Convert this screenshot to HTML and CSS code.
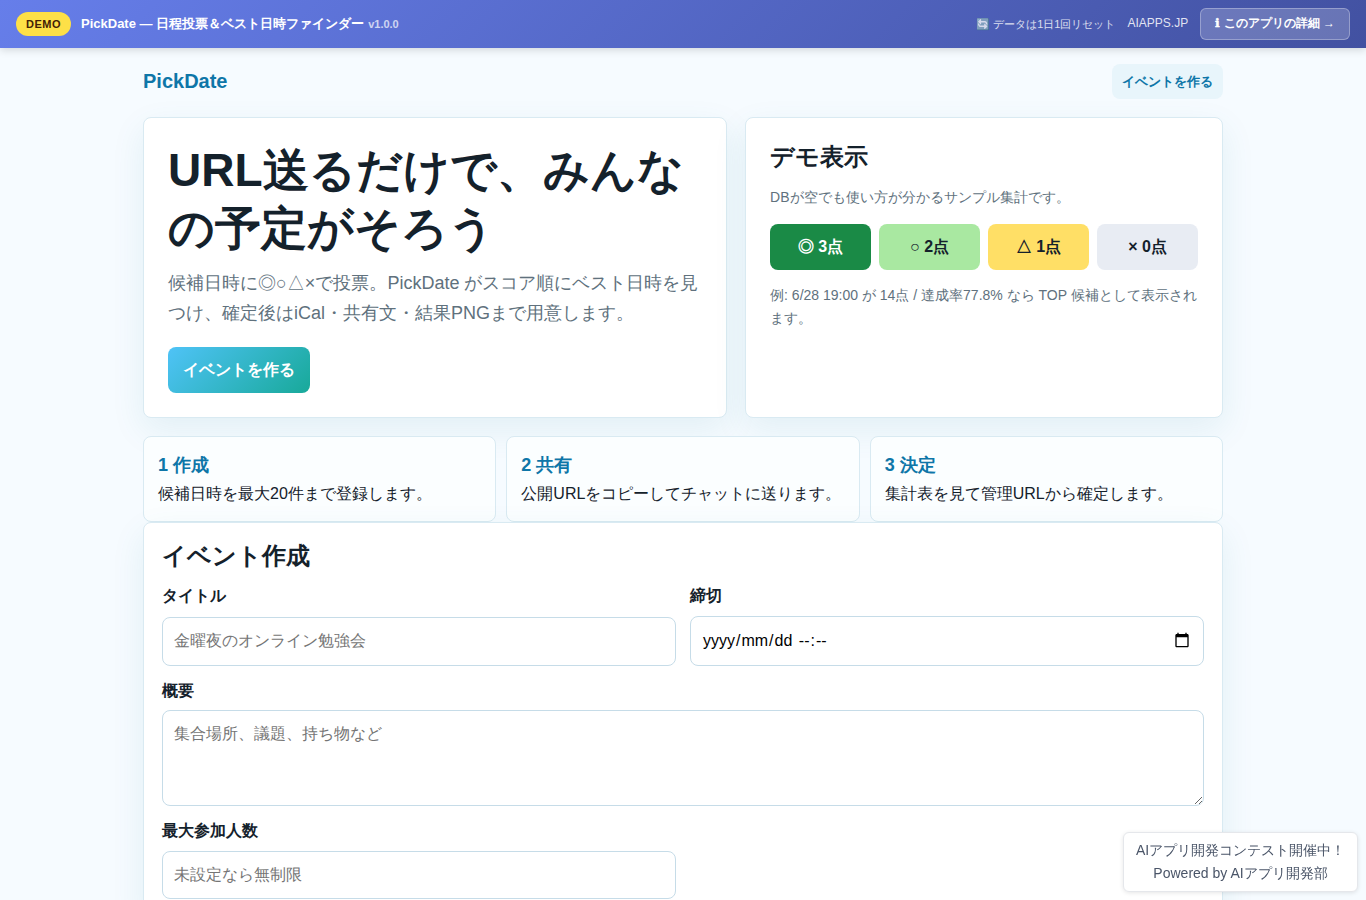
FILE: index.html
```html
<!DOCTYPE html>
<html lang="ja">
<head>
<meta charset="utf-8">
<title>PickDate</title>
<link rel="stylesheet" href="styles.css">
</head>
<body>
<header class="demo-bar">
  <div class="demo-left">
    <span class="demo-badge">DEMO</span>
    <span class="demo-title">PickDate — 日程投票＆ベスト日時ファインダー <small class="demo-version">v1.0.0</small></span>
  </div>
  <div class="demo-right">
    <span class="demo-reset">🔄 データは1日1回リセット</span>
    <a class="demo-site" href="#">AIAPPS.JP</a>
    <a class="demo-detail" href="#"><span class="info">ℹ</span> このアプリの詳細 →</a>
  </div>
</header>
<div class="shell">
  <nav class="topbar">
    <a class="brand" href="#">PickDate</a>
    <a class="nav-link" href="#create">イベントを作る</a>
  </nav>
  <main>
    <section class="hero">
      <div class="card hero-copy">
        <h1>URL送るだけで、みんなの予定がそろう</h1>
        <p class="lead">候補日時に◎○△×で投票。PickDate がスコア順にベスト日時を見つけ、確定後はiCal・共有文・結果PNGまで用意します。</p>
        <a class="primary" href="#create">イベントを作る</a>
      </div>
      <div class="card demo-card">
        <h2>デモ表示</h2>
        <p class="muted">DBが空でも使い方が分かるサンプル集計です。</p>
        <div class="scores">
          <span class="score best">◎ 3点</span>
          <span class="score good">○ 2点</span>
          <span class="score maybe">△ 1点</span>
          <span class="score no">× 0点</span>
        </div>
        <p class="muted">例: 6/28 19:00 が 14点 / 達成率77.8% なら TOP 候補として表示されます。</p>
      </div>
    </section>
    <section class="steps">
      <div class="step"><strong>1 作成</strong><span>候補日時を最大20件まで登録します。</span></div>
      <div class="step"><strong>2 共有</strong><span>公開URLをコピーしてチャットに送ります。</span></div>
      <div class="step"><strong>3 決定</strong><span>集計表を見て管理URLから確定します。</span></div>
    </section>
    <form class="card form" id="create">
      <h2>イベント作成</h2>
      <div class="fields">
        <label>タイトル<input class="control" type="text" placeholder="金曜夜のオンライン勉強会"></label>
        <div class="field">締切
          <div class="control date" role="textbox" tabindex="0">
            <span class="date-text"><span>yyyy</span>/<span>mm</span>/<span>dd</span> <span>--</span>:<span>--</span></span>
            <svg class="calendar" viewBox="0 0 24 24" aria-hidden="true"><path d="M20 3h-1V1h-2v2H7V1H5v2H4c-1.1 0-2 .9-2 2v16c0 1.1.9 2 2 2h16c1.1 0 2-.9 2-2V5c0-1.1-.9-2-2-2zm0 18H4V8h16v13z"/></svg>
          </div>
        </div>
        <label class="wide">概要<textarea class="control" placeholder="集合場所、議題、持ち物など"></textarea></label>
        <label>最大参加人数<input class="control" type="number" placeholder="未設定なら無制限"></label>
      </div>
    </form>
  </main>
</div>
<aside class="powered"><span>AIアプリ開発コンテスト開催中！</span><span>Powered by AIアプリ開発部</span></aside>
</body>
</html>
```
FILE: styles.css
```css
* { box-sizing: border-box; }
html { height: 100%; overflow: hidden; }
body {
  margin: 0;
  height: 100%;
  overflow: hidden;
  background: #f6fbff;
  color: #14212b;
  font-family: "Liberation Sans", sans-serif;
  font-size: 16px;
  line-height: 1.65;
}
a { text-decoration: none; }
h1, h2, p { margin: 0; }

.demo-bar {
  position: relative;
  height: 48px;
  padding: 0 16px;
  display: flex;
  align-items: center;
  justify-content: space-between;
  background: linear-gradient(135deg, #667eea, #4251a1);
  box-shadow: 0 2px 8px rgba(0, 0, 0, .15);
  color: #fff;
  line-height: 1.5;
}
.demo-left { display: flex; align-items: center; gap: 10px; }
.demo-right { display: flex; align-items: center; gap: 12px; }
.demo-badge {
  padding: 4px 10px;
  border-radius: 12px;
  background: #fde047;
  color: #422006;
  font-size: 11px;
  font-weight: 700;
  letter-spacing: .5px;
}
.demo-title { font-size: 13px; font-weight: 600; }
.demo-version { margin-left: .4px; font-size: 11px; opacity: .7; }
.demo-reset { font-size: 11px; opacity: .8; }
.demo-site { padding-bottom: 2px; color: rgba(255, 255, 255, .85); font-size: 12px; }
.demo-detail {
  padding: 5px 14px 7px;
  border: 1px solid rgba(255, 255, 255, .3);
  border-radius: 6px;
  background: rgba(255, 255, 255, .2);
  color: #fff;
  font-size: 12px;
  font-weight: 600;
}
.info {
  display: inline-block;
  width: 5.2px;
  font-family: "DejaVu Sans", sans-serif;
  line-height: 1;
  -webkit-text-stroke: .5px #fff;
}

.shell { width: 1080px; margin: 0 auto; }
.topbar {
  display: flex;
  justify-content: space-between;
  align-items: center;
  padding: 16px 0 18px;
}
.brand { color: #0e76a8; font-size: 20px; font-weight: 700; }
.nav-link {
  padding: 7px 10px;
  border-radius: 8px;
  background: #e8f5fb;
  color: #0e76a8;
  font-size: 13px;
  font-weight: 700;
}
.card {
  border: 1px solid #d9eaf2;
  border-radius: 8px;
  background: #fff;
  box-shadow: 0 12px 34px rgba(20, 118, 148, .09);
}
.hero { display: grid; grid-template-columns: 1.1fr .9fr; gap: 18px; }
.hero .card { padding: 24px; }
h1 { margin-bottom: 12px; font-size: 46px; line-height: 1.25; }
h2 { font-size: 24px; line-height: 1.25; }
.lead { margin-bottom: 18px; color: #60717d; font-size: 18px; }
.primary {
  display: inline-block;
  padding: 10px 15px;
  border-radius: 8px;
  background: linear-gradient(135deg, #4fc3f7, #18a999);
  color: #fff;
  font-weight: 700;
}
.demo-card h2 { margin-bottom: 14px; }
.muted { color: #60717d; font-size: 14px; }
.scores {
  display: grid;
  grid-template-columns: repeat(4, 1fr);
  gap: 8px;
  margin: 14px 0;
}
.score { padding: 10px; border-radius: 8px; text-align: center; font-weight: 700; }
.best { background: #1a8a46; color: #fff; }
.good { background: #a9e8a1; }
.maybe { background: #ffdf66; }
.no { background: #e8ecf3; }

.steps { display: grid; grid-template-columns: repeat(3, 1fr); gap: 10px; margin-top: 18px; }
.step {
  position: relative;
  padding: 14px;
  border: 1px solid #d9eaf2;
  border-radius: 8px;
  background: #fbfeff;
}
.step strong { display: block; color: #0e76a8; font-size: 18px; }

.form { position: relative; padding: 18px; }
.form h2 { margin-bottom: 12px; }
.fields { display: grid; grid-template-columns: 1fr 1fr; gap: 12px 14px; }
.fields label, .field { display: grid; gap: 6px; font-weight: 700; }
.wide { grid-column: 1 / -1; }
.control {
  width: 100%;
  padding: 10px 11px;
  border: 1px solid #c6dce8;
  border-radius: 8px;
  background: #fff;
  color: #000;
  font: inherit;
  font-weight: 400;
}
textarea.control { display: block; height: 96px; resize: vertical; }
.date {
  height: 50.4px;
  display: flex;
  align-items: center;
  justify-content: space-between;
}
.date-text span { padding: 0 1px; }
.calendar { width: 16px; height: 16px; margin: 0 2px 1px 0; fill: #000; }

.powered {
  position: fixed;
  right: 8px;
  bottom: 8px;
  width: 235px;
  height: 60px;
  padding: 6px 0;
  display: flex;
  flex-direction: column;
  align-items: center;
  border: 1px solid #e5e7eb;
  border-radius: 6px;
  background: #fff;
  box-shadow: 0 1px 4px rgba(0, 0, 0, .1);
  color: #4a5568;
  font-size: 14px;
}
```
